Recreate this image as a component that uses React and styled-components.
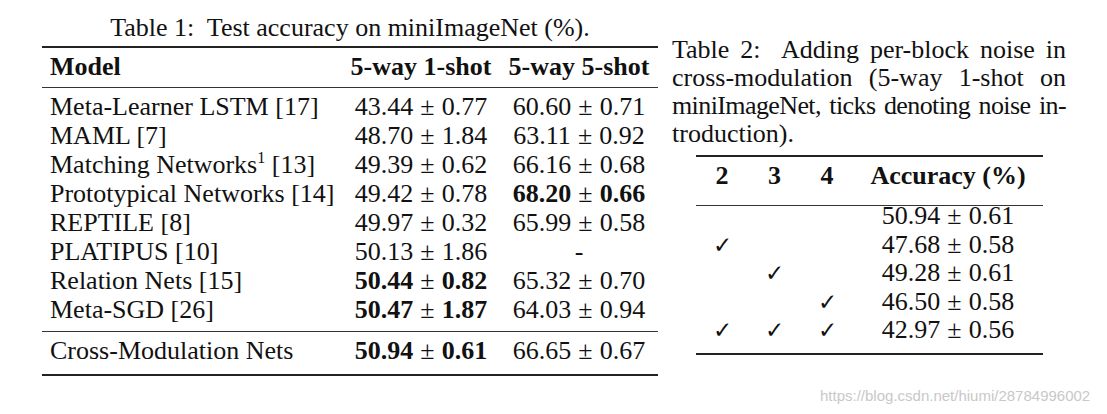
import React from 'react';
import styled, { createGlobalStyle } from 'styled-components';

const GlobalStyle = createGlobalStyle`
  html, body {
    margin: 0;
    padding: 0;
    background: #fff;
  }
  body {
    font-family: "Liberation Serif", "Times New Roman", serif;
    color: #111;
  }
`;

const t1Rows = [
  { name: 'Meta-Learner LSTM [17]', a: '43.44', ae: '0.77', b: '60.60', be: '0.71' },
  { name: 'MAML [7]', a: '48.70', ae: '1.84', b: '63.11', be: '0.92' },
  { name: 'Matching Networks', sup: '1', ref: ' [13]', a: '49.39', ae: '0.62', b: '66.16', be: '0.68' },
  { name: 'Prototypical Networks [14]', a: '49.42', ae: '0.78', b: '68.20', be: '0.66', boldB: true },
  { name: 'REPTILE [8]', a: '49.97', ae: '0.32', b: '65.99', be: '0.58' },
  { name: 'PLATIPUS [10]', a: '50.13', ae: '1.86', b: null },
  { name: 'Relation Nets [15]', a: '50.44', ae: '0.82', b: '65.32', be: '0.70', boldA: true },
  { name: 'Meta-SGD [26]', a: '50.47', ae: '1.87', b: '64.03', be: '0.94', boldA: true },
];

const t2Rows = [
  { ticks: [false, false, false], acc: '50.94', err: '0.61' },
  { ticks: [true, false, false], acc: '47.68', err: '0.58' },
  { ticks: [false, true, false], acc: '49.28', err: '0.61' },
  { ticks: [false, false, true], acc: '46.50', err: '0.58' },
  { ticks: [true, true, true], acc: '42.97', err: '0.56' },
];

const caption2 = [
  { text: 'Table 2:\u00a0 Adding per-block noise in' },
  { text: 'cross-modulation (5-way 1-shot on' },
  { text: 'miniImageNet, ticks denoting noise in-', tight: true },
  { text: 'troduction).', last: true },
];

function Value({ v, e, bold }) {
  return (
    <span>
      <Num $bold={bold}>{v}</Num>
      <Pm>±</Pm>
      <Num $bold={bold}>{e}</Num>
    </span>
  );
}

function App() {
  return (
    <Page>
      <GlobalStyle />
      <LeftFigure>
        <Caption1>Table 1:&nbsp; Test accuracy on miniImageNet (%).</Caption1>
        <Table1>
          <colgroup>
            <col style={{ width: 300 }} />
            <col style={{ width: 158 }} />
            <col style={{ width: 158 }} />
          </colgroup>
          <thead>
            <HeadRow>
              <HeadCell $align="left">Model</HeadCell>
              <HeadCell>5-way 1-shot</HeadCell>
              <HeadCell>5-way 5-shot</HeadCell>
            </HeadRow>
          </thead>
          <tbody>
            {t1Rows.map((r, i) => (
              <BodyRow key={r.name} $first={i === 0} $last={i === t1Rows.length - 1}>
                <NameCell>
                  {r.name}
                  {r.sup && <Sup>{r.sup}</Sup>}
                  {r.ref}
                </NameCell>
                <ValCell>
                  <Value v={r.a} e={r.ae} bold={r.boldA} />
                </ValCell>
                <ValCell>
                  {r.b ? <Value v={r.b} e={r.be} bold={r.boldB} /> : '-'}
                </ValCell>
              </BodyRow>
            ))}
          </tbody>
          <tfoot>
            <FootRow>
              <NameCell>Cross-Modulation Nets</NameCell>
              <ValCell>
                <Value v="50.94" e="0.61" bold />
              </ValCell>
              <ValCell>
                <Value v="66.65" e="0.67" />
              </ValCell>
            </FootRow>
          </tfoot>
        </Table1>
      </LeftFigure>

      <RightFigure>
        <Caption2>
          {caption2.map((line, i) => (
            <CaptionLine key={i} $last={line.last} $tight={line.tight}>
              {line.text}
            </CaptionLine>
          ))}
        </Caption2>
        <Table2>
          <colgroup>
            <col style={{ width: 52 }} />
            <col style={{ width: 53 }} />
            <col style={{ width: 52 }} />
            <col style={{ width: 190 }} />
          </colgroup>
          <thead>
            <HeadRow2>
              <HeadCell>2</HeadCell>
              <HeadCell>3</HeadCell>
              <HeadCell>4</HeadCell>
              <HeadCell>Accuracy (%)</HeadCell>
            </HeadRow2>
          </thead>
          <tbody>
            {t2Rows.map((r, i) => (
              <BodyRow2 key={i} $first={i === 0} $last={i === t2Rows.length - 1}>
                {r.ticks.map((t, j) => (
                  <TickCell key={j}>{t ? '✓' : ''}</TickCell>
                ))}
                <ValCell>
                  <Value v={r.acc} e={r.err} />
                </ValCell>
              </BodyRow2>
            ))}
          </tbody>
        </Table2>
        <Watermark>https://blog.csdn.net/hiumi/28784996002</Watermark>
      </RightFigure>
    </Page>
  );
}

export default App;

const Page = styled.div`
  width: 1107px;
  height: 414px;
  display: flex;
  align-items: flex-start;
  padding-left: 42px;
  box-sizing: border-box;
  overflow: hidden;
  font-size: 26px;
`;

const LeftFigure = styled.div`
  width: 616px;
  display: flex;
  flex-direction: column;
  align-items: center;
  padding-top: 13px;
`;

const Caption1 = styled.div`
  height: 33px;
  line-height: 30px;
  white-space: nowrap;
`;

const Table1 = styled.table`
  width: 616px;
  table-layout: fixed;
  border-collapse: collapse;
  border-top: 2px solid #222;
  border-bottom: 2px solid #222;
`;

const HeadRow = styled.tr`
  height: 40px;
  border-bottom: 1px solid #333;
`;

const HeadCell = styled.th`
  font-weight: bold;
  text-align: ${(p) => p.$align || 'center'};
  padding: 0 0 0 ${(p) => (p.$align === 'left' ? '8px' : '0')};
  white-space: nowrap;
  line-height: 26px;
`;

const BodyRow = styled.tr`
  line-height: 29px;
  td {
    vertical-align: middle;
    padding-top: ${(p) => (p.$first ? '4px' : '0')};
    padding-bottom: ${(p) => (p.$last ? '7px' : '0')};
  }
`;

const FootRow = styled.tr`
  border-top: 1px solid #333;
  line-height: 29px;
  td {
    vertical-align: middle;
    padding-top: 4px;
    padding-bottom: 9px;
  }
`;

const NameCell = styled.td`
  padding-left: 8px;
  white-space: nowrap;
`;

const Sup = styled.sup`
  font-size: 16px;
  line-height: 0;
  vertical-align: 10px;
`;

const ValCell = styled.td`
  text-align: center;
  white-space: nowrap;
`;

const Num = styled.span`
  font-weight: ${(p) => (p.$bold ? 'bold' : 'normal')};
`;

const Pm = styled.span`
  margin: 0 7px;
`;

const RightFigure = styled.div`
  position: relative;
  width: 394px;
  margin-left: 14px;
  padding-top: 36px;
  height: 414px;
  box-sizing: border-box;
`;

const Caption2 = styled.div`
  line-height: 28px;
`;

const CaptionLine = styled.div`
  text-align: left;
  text-align-last: ${(p) => (p.$last ? 'left' : 'justify')};
  letter-spacing: ${(p) => (p.$tight ? '-0.6px' : '0')};
  word-spacing: ${(p) => (p.$tight ? '-2px' : '0')};
  white-space: nowrap;
`;

const Table2 = styled.table`
  margin: 7px 0 0 24px;
  width: 347px;
  table-layout: fixed;
  border-collapse: collapse;
  border-top: 2px solid #222;
  border-bottom: 2px solid #222;
`;

const HeadRow2 = styled.tr`
  border-bottom: 1px solid #333;
  th {
    padding-top: 6px;
    padding-bottom: 16px;
  }
`;

const BodyRow2 = styled.tr`
  line-height: ${(p) => (p.$first ? '20px' : '28.6px')};
  td {
    vertical-align: top;
    padding-top: 0;
    padding-bottom: ${(p) => (p.$first ? '4.5px' : p.$last ? '8px' : '0')};
  }
`;

const TickCell = styled.td`
  text-align: center;
  font-family: "DejaVu Serif", serif;
  font-size: 23px;
`;

const Watermark = styled.div`
  position: absolute;
  left: 148px;
  top: 387px;
  font-family: "Liberation Sans", Arial, sans-serif;
  font-size: 15px;
  color: #c8c8c8;
  white-space: nowrap;
`;
